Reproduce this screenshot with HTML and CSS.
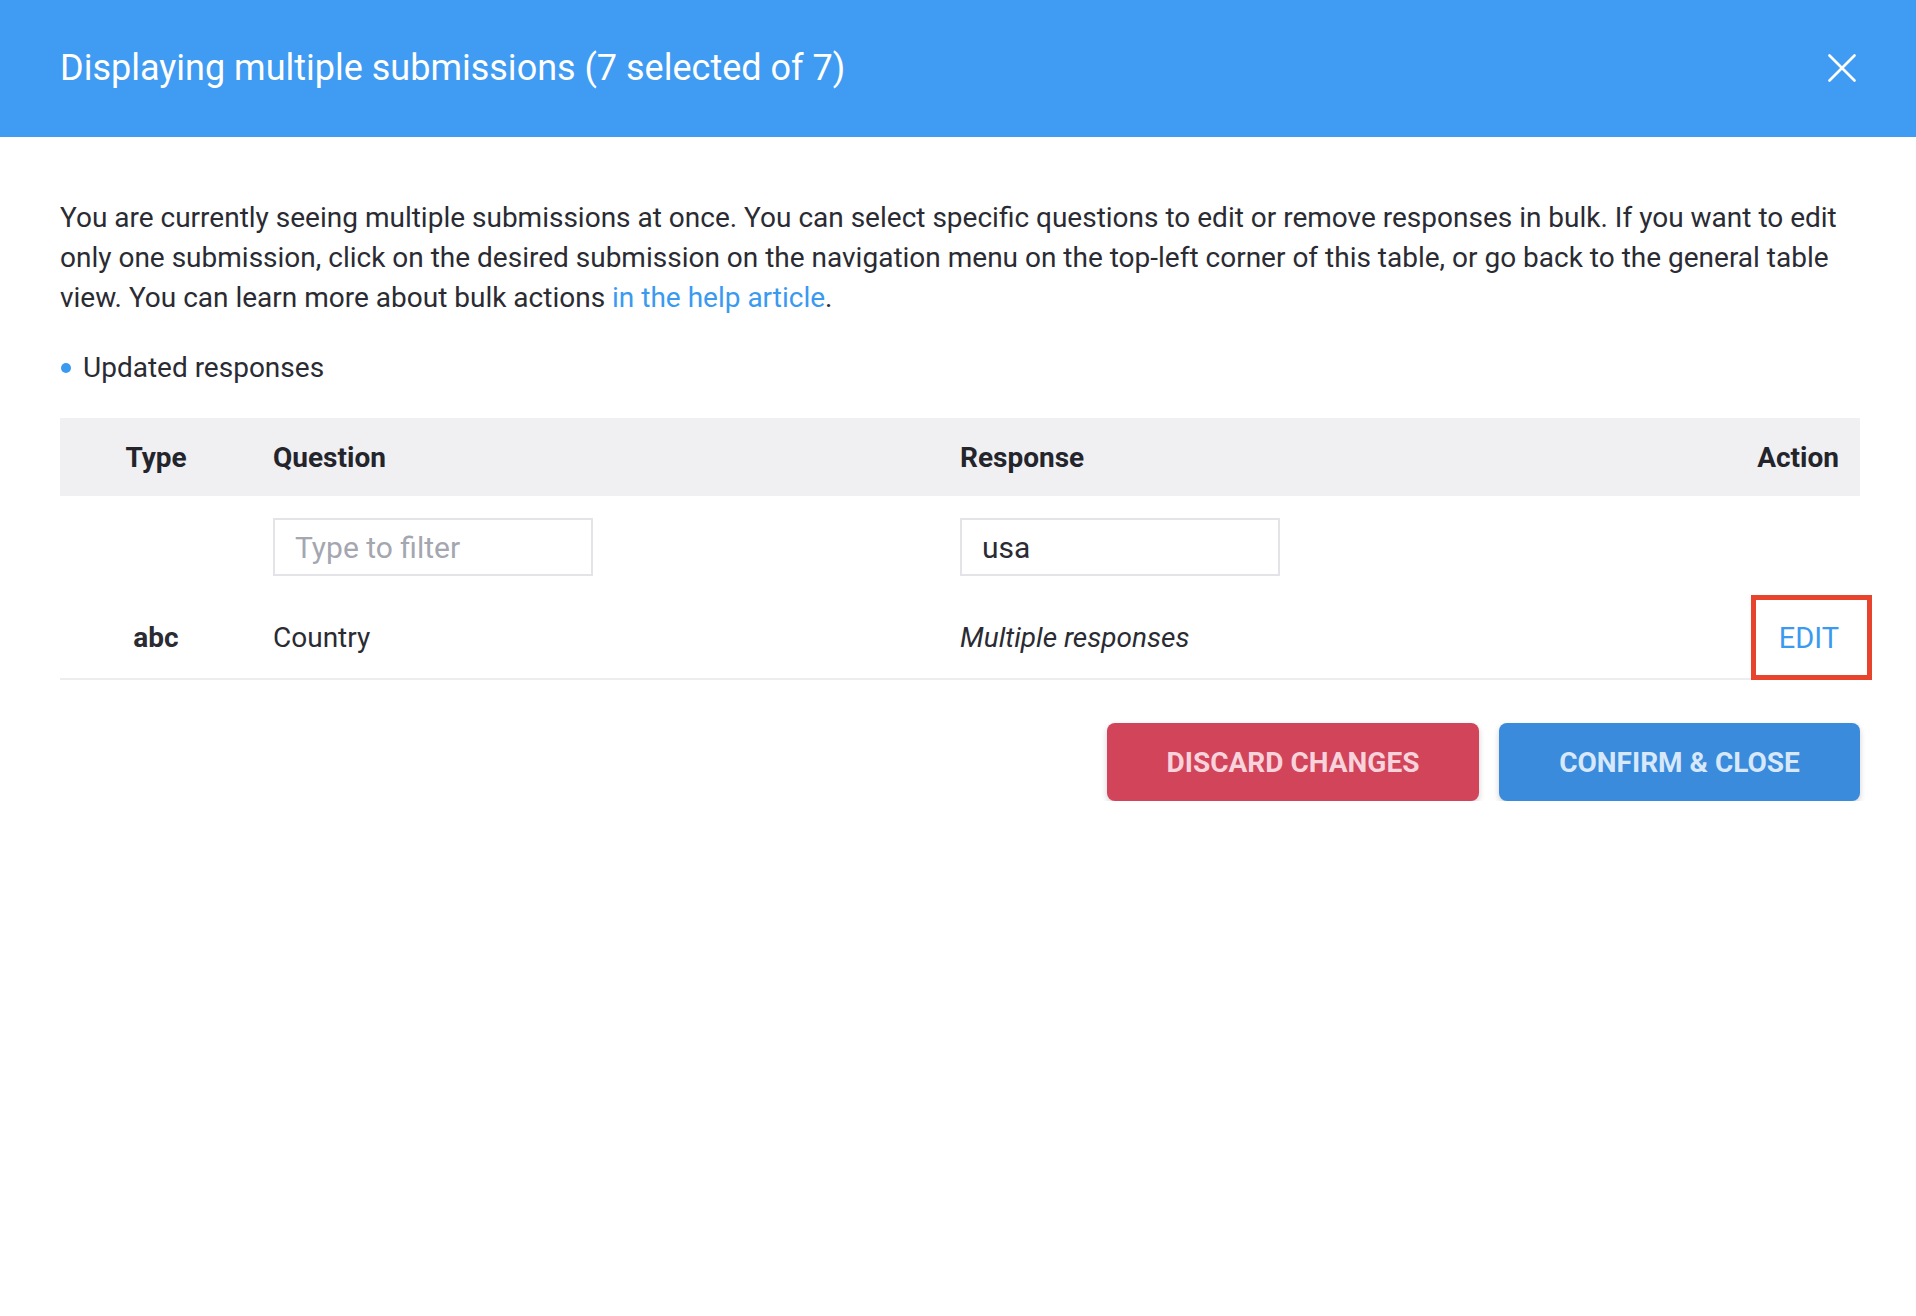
FILE: index.html
```html
<!DOCTYPE html>
<html lang="en">
<head>
<meta charset="utf-8">
<title>Bulk edit</title>
<link rel="stylesheet" href="styles.css">
</head>
<body>
<div class="modal">
  <header class="modal-header">
    <h1 class="modal-title">Displaying multiple submissions (7 selected of 7)</h1>
    <button class="close-btn" aria-label="Close">
      <svg width="28" height="28" viewBox="0 0 28 28"><path d="M1.5 1.5 L26.5 26.5 M26.5 1.5 L1.5 26.5" stroke="#fff" stroke-width="2.6" stroke-linecap="round"/></svg>
    </button>
  </header>
  <div class="modal-body">
    <p class="intro">You are currently seeing multiple submissions at once. You can select specific questions to edit or remove responses in bulk. If you want to edit only one submission, click on the desired submission on the navigation menu on the top-left corner of this table, or go back to the general table view. You can learn more about bulk actions <a class="link" href="#">in the help article</a>.</p>
    <div class="legend"><span class="dot"></span>Updated responses</div>
    <table class="bulk-table">
      <colgroup>
        <col class="c-type"><col class="c-question"><col class="c-response"><col class="c-action">
      </colgroup>
      <thead>
        <tr class="head-row">
          <th class="col-type">Type</th>
          <th class="col-question">Question</th>
          <th class="col-response">Response</th>
          <th class="col-action">Action</th>
        </tr>
      </thead>
      <tbody>
        <tr class="filter-row">
          <td></td>
          <td class="col-question"><input class="filter" type="text" placeholder="Type to filter"></td>
          <td class="col-response"><input class="filter" type="text" value="usa"></td>
          <td></td>
        </tr>
        <tr class="data-row">
          <td class="col-type type-cell">abc</td>
          <td class="col-question">Country</td>
          <td class="col-response multi">Multiple responses</td>
          <td class="col-action action-cell"><a class="edit" href="#">EDIT</a><span class="highlight"></span></td>
        </tr>
      </tbody>
    </table>
    <div class="actions">
      <button class="btn btn-discard">DISCARD CHANGES</button>
      <button class="btn btn-confirm">CONFIRM &amp; CLOSE</button>
    </div>
  </div>
</div>
</body>
</html>
```
FILE: styles.css
```css
html, body {
  margin: 0;
  padding: 0;
  background: #ffffff;
}
body {
  font-family: Roboto, "Liberation Sans", Arial, sans-serif;
  color: #2a2b33;
}
.modal {
  width: 1916px;
}
.modal-header {
  height: 137px;
  background: #409bf3;
  display: flex;
  align-items: center;
  justify-content: space-between;
  padding: 0 60px 2px 60px;
  box-sizing: border-box;
}
.modal-title {
  margin: 0;
  font-size: 36px;
  font-weight: 400;
  color: #ffffff;
}
.close-btn {
  background: none;
  border: 0;
  padding: 0;
  width: 28px;
  height: 28px;
  cursor: pointer;
  display: flex;
}
.modal-body {
  padding: 61px 56px 0 60px;
}
.intro {
  margin: 0;
  font-size: 28px;
  line-height: 40px;
}
.link {
  color: #3a9af0;
  text-decoration: none;
}
.legend {
  margin-top: 30px;
  display: flex;
  align-items: center;
  font-size: 28px;
  line-height: 40px;
}
.dot {
  width: 10px;
  height: 10px;
  border-radius: 50%;
  background: #3a9af0;
  margin: 0 12px 0 1px;
}
.bulk-table {
  margin-top: 30px;
  width: 1800px;
  border-collapse: collapse;
  table-layout: fixed;
  font-size: 28px;
}
.c-type { width: 192px; }
.c-question { width: 687px; }
.c-response { width: 620px; }
.c-action { width: 301px; }
.head-row {
  background: #f0f0f2;
  height: 78px;
}
.head-row th {
  font-weight: 700;
  text-align: left;
  padding: 0 21px;
  color: #24252c;
}
.head-row th.col-type { text-align: center; padding: 0; }
.head-row th.col-action { text-align: right; }
.filter-row td {
  padding: 22px 21px 21px;
  vertical-align: top;
}
.filter {
  width: 320px;
  height: 58px;
  box-sizing: border-box;
  border: 2px solid #e3e3e8;
  padding: 0 20px;
  font-family: inherit;
  font-size: 30px;
  color: #2a2b33;
  outline: none;
  background: #fff;
}
.filter::placeholder {
  color: #a4a6b0;
}
.data-row {
  height: 82px;
  border-bottom: 2px solid #ededef;
}
.data-row td {
  padding: 0 21px;
  vertical-align: middle;
}
.type-cell {
  text-align: center;
  font-weight: 700;
  padding: 0 !important;
}
.multi {
  font-style: italic;
}
.action-cell {
  text-align: right;
  position: relative;
}
.edit {
  color: #3a9af0;
  text-decoration: none;
  font-size: 29px;
}
.highlight {
  position: absolute;
  right: -12px;
  top: -2px;
  bottom: -2px;
  width: 121px;
  box-sizing: border-box;
  border: 5px solid #e8432c;
}
.actions {
  margin-top: 43px;
  display: flex;
  justify-content: flex-end;
  gap: 20px;
  width: 1800px;
}
.btn {
  height: 78px;
  border: 0;
  border-radius: 8px;
  font-family: inherit;
  font-size: 28px;
  font-weight: 700;
  cursor: pointer;
  box-shadow: 0 3px 6px rgba(0, 0, 0, 0.18);
}
.btn-discard {
  width: 372px;
  background: #d2445a;
  color: #f8d3dc;
}
.btn-confirm {
  width: 361px;
  background: #3a8bdc;
  color: #d7e8fa;
}
```
